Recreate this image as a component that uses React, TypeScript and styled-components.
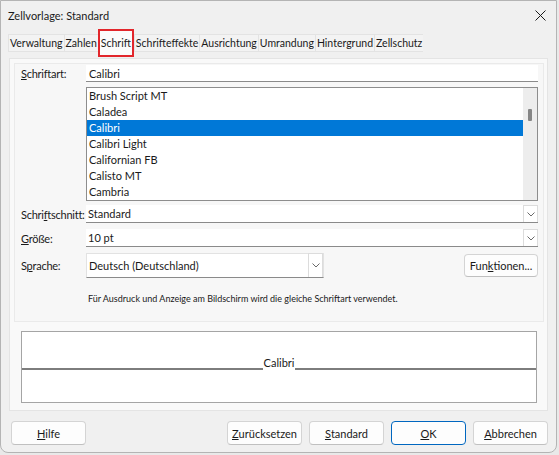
import React from 'react';
import styled, { createGlobalStyle } from 'styled-components';

const GlobalStyle = createGlobalStyle`
  html, body {
    margin: 0;
    padding: 0;
    background: #e9e9e9;
  }
  body {
    font-family: Lato, 'Noto Sans', sans-serif;
    font-size: 11px;
    color: #1a1a1a;
  }
`;

const tabs = ['Verwaltung', 'Zahlen', 'Schrift', 'Schrifteffekte', 'Ausrichtung', 'Umrandung', 'Hintergrund', 'Zellschutz'];
const fonts = ['Brush Script MT', 'Caladea', 'Calibri', 'Calibri Light', 'Californian FB', 'Calisto MT', 'Cambria'];

// renders a label with the access key underlined
const Key: React.FC<{ text: string; at: number }> = ({ text, at }) => (
  <>
    {text.slice(0, at)}
    <u>{text[at]}</u>
    {text.slice(at + 1)}
  </>
);

const Chevron = () => (
  <svg width="8" height="5" viewBox="0 0 8 5">
    <path d="M0.5 0.5 L4 4 L7.5 0.5" fill="none" stroke="#6a6a6a" strokeWidth="1" />
  </svg>
);

const App: React.FC = () => {
  return (
    <>
      <GlobalStyle />
      <Window>
        <TitleBar>
          <Title>Zellvorlage: Standard</Title>
          <Close>
            <svg width="11" height="11" viewBox="0 0 11 11">
              <path d="M0.5 0.5 L10.5 10.5 M10.5 0.5 L0.5 10.5" stroke="#1a1a1a" strokeWidth="1" />
            </svg>
          </Close>
        </TitleBar>
        <TabBar>
          {tabs.map((t) => (
            <Tab key={t} active={t === 'Schrift'}>
              {t}
            </Tab>
          ))}
        </TabBar>
        <TabPage>
          <FontBox>
            <Row>
              <Label>
                <Key text="Schriftart:" at={0} />
              </Label>
              <TextField>Calibri</TextField>
            </Row>
            <Row>
              <Label />
              <ListBox>
                <ListItems>
                  {fonts.map((f) => (
                    <ListItem key={f} selected={f === 'Calibri'}>
                      {f}
                    </ListItem>
                  ))}
                </ListItems>
                <ScrollTrack>
                  <ScrollThumb />
                </ScrollTrack>
              </ListBox>
            </Row>
            <Row gap={4}>
              <Label>
                <Key text="Schriftschnitt:" at={5} />
              </Label>
              <Combo>
                <ComboText>Standard</ComboText>
                <DropButton>
                  <Chevron />
                </DropButton>
              </Combo>
            </Row>
            <Row gap={6}>
              <Label>
                <Key text="Größe:" at={0} />
              </Label>
              <Combo>
                <ComboText>10 pt</ComboText>
                <DropButton>
                  <Chevron />
                </DropButton>
              </Combo>
            </Row>
            <Row gap={6}>
              <Label>
                <Key text="Sprache:" at={1} />
              </Label>
              <LangCombo>
                <ComboText>Deutsch (Deutschland)</ComboText>
                <DropButton tall>
                  <Chevron />
                </DropButton>
              </LangCombo>
              <Spacer />
              <PushButton width={74} height={23}>
                Fun<u>k</u>tionen...
              </PushButton>
            </Row>
            <Info>Für Ausdruck und Anzeige am Bildschirm wird die gleiche Schriftart verwendet.</Info>
          </FontBox>
          <Preview>
            <PreviewLine />
            <PreviewText>Calibri</PreviewText>
            <PreviewLine />
          </Preview>
        </TabPage>
        <ButtonBar>
          <PushButton width={75} height={24}>
            <Key text="Hilfe" at={0} />
          </PushButton>
          <Spacer />
          <PushButton width={75} height={24}>
            <Key text="Zurücksetzen" at={0} />
          </PushButton>
          <PushButton width={75} height={24}>
            <Key text="Standard" at={0} />
          </PushButton>
          <PushButton width={75} height={24} primary>
            <Key text="OK" at={0} />
          </PushButton>
          <PushButton width={75} height={24}>
            <Key text="Abbrechen" at={0} />
          </PushButton>
        </ButtonBar>
      </Window>
    </>
  );
};

const Window = styled.div`
  width: 557px;
  height: 453px;
  box-sizing: border-box;
  background: #f0f0f0;
  border: 1px solid #b4b4b4;
  border-radius: 0 0 8px 8px;
  display: flex;
  flex-direction: column;
  overflow: hidden;
`;

const TitleBar = styled.div`
  height: 28px;
  display: flex;
  align-items: center;
  justify-content: space-between;
  padding: 0 8px 0 7px;
`;

const Title = styled.div`
  font-size: 11px;
`;

const Close = styled.div`
  display: flex;
  align-items: center;
  margin-right: 2px;
`;

const TabBar = styled.div`
  display: flex;
  height: 28px;
  align-items: center;
  padding-left: 7px;
`;

const Tab = styled.div<{ active?: boolean }>`
  height: ${(p) => (p.active ? '28px' : '18px')};
  box-sizing: border-box;
  padding: 0 1px;
  display: flex;
  align-items: center;
  font-size: 10.5px;
  background: ${(p) => (p.active ? '#fbfbfb' : '#f3f3f3')};
  border: ${(p) => (p.active ? '2px solid #e2262b' : '1px solid #e3e3e3')};
  border-left-width: ${(p) => (p.active ? '2px' : '1px')};
  border-right-width: ${(p) => (p.active ? '2px' : '0')};
  white-space: nowrap;
`;

const TabPage = styled.div`
  margin: 1px 8px 0 8px;
  height: 353px;
  box-sizing: border-box;
  background: #f9f9f9;
  border: 1px solid #e4e4e4;
  padding: 4px 3px 0 4px;
  display: flex;
  flex-direction: column;
`;

const FontBox = styled.div`
  height: 259px;
  box-sizing: border-box;
  background: #f7f7f7;
  border: 1px solid #eaeaea;
  padding: 1px 5px 0 6px;
  display: flex;
  flex-direction: column;
`;

const Row = styled.div<{ gap?: number }>`
  display: flex;
  align-items: center;
  margin-top: ${(p) => p.gap ?? 5}px;
  &:first-child {
    margin-top: 0;
  }
`;

const Label = styled.div`
  width: 65px;
  flex-shrink: 0;
  white-space: nowrap;
  letter-spacing: -0.25px;
`;

const TextField = styled.div`
  flex: 1;
  height: 17px;
  box-sizing: border-box;
  background: #fff;
  border-bottom: 1px solid #8a8a8a;
  padding-left: 3px;
  display: flex;
  align-items: center;
`;

const ListBox = styled.div`
  flex: 1;
  height: 114px;
  box-sizing: border-box;
  background: #fff;
  border: 1px solid #8d8d8d;
  display: flex;
`;

const ListItems = styled.div`
  flex: 1;
  display: flex;
  flex-direction: column;
`;

const ListItem = styled.div<{ selected?: boolean }>`
  height: 16px;
  line-height: 16px;
  padding-left: 2px;
  background: ${(p) => (p.selected ? '#0078d7' : 'transparent')};
  color: ${(p) => (p.selected ? '#fff' : '#1a1a1a')};
`;

const ScrollTrack = styled.div`
  width: 14px;
  background: #ededed;
  display: flex;
  justify-content: center;
  padding-top: 21px;
`;

const ScrollThumb = styled.div`
  width: 4px;
  height: 12px;
  border-radius: 1px;
  background: #868686;
`;

const Combo = styled.div`
  flex: 1;
  height: 18px;
  box-sizing: border-box;
  background: #fff;
  border-bottom: 1px solid #8a8a8a;
  display: flex;
  align-items: stretch;
`;

const LangCombo = styled(Combo)`
  flex: 0 0 238px;
  height: 25px;
  border: 1px solid #e2e2e2;
  border-bottom-color: #8a8a8a;
`;

const ComboText = styled.div`
  flex: 1;
  padding-left: 2px;
  display: flex;
  align-items: center;
  white-space: nowrap;
`;

const DropButton = styled.div<{ tall?: boolean }>`
  width: 15px;
  box-sizing: border-box;
  border: 1px solid #dcdcdc;
  border-bottom: none;
  display: flex;
  align-items: center;
  justify-content: center;
  margin-top: ${(p) => (p.tall ? '-1px' : '0')};
`;

const Spacer = styled.div`
  flex: 1;
`;

const PushButton = styled.div<{ width: number; height: number; primary?: boolean }>`
  width: ${(p) => p.width}px;
  height: ${(p) => p.height}px;
  box-sizing: border-box;
  background: #fdfdfd;
  border: 1px solid ${(p) => (p.primary ? '#0067c0' : '#d4d4d4')};
  border-bottom-color: ${(p) => (p.primary ? '#0067c0' : '#c0c0c0')};
  border-radius: 4px;
  display: flex;
  align-items: center;
  justify-content: center;
  white-space: nowrap;
`;

const Info = styled.div`
  font-size: 9px;
  margin: 15px 0 0 67px;
  color: #1a1a1a;
`;

const Preview = styled.div`
  margin: 9px 7px 0 7px;
  height: 72px;
  box-sizing: border-box;
  background: #fff;
  border: 1px solid #a5a5a5;
  display: flex;
  align-items: center;
`;

const PreviewLine = styled.div`
  flex: 1;
  height: 2px;
  background: #7d7d7d;
  margin-top: 3px;
`;

const PreviewText = styled.div`
  padding: 0 1px;
  margin-top: -10px;
`;

const ButtonBar = styled.div`
  display: flex;
  align-items: center;
  gap: 7px;
  padding: 10px 8px 0 10px;
`;

export default App;
